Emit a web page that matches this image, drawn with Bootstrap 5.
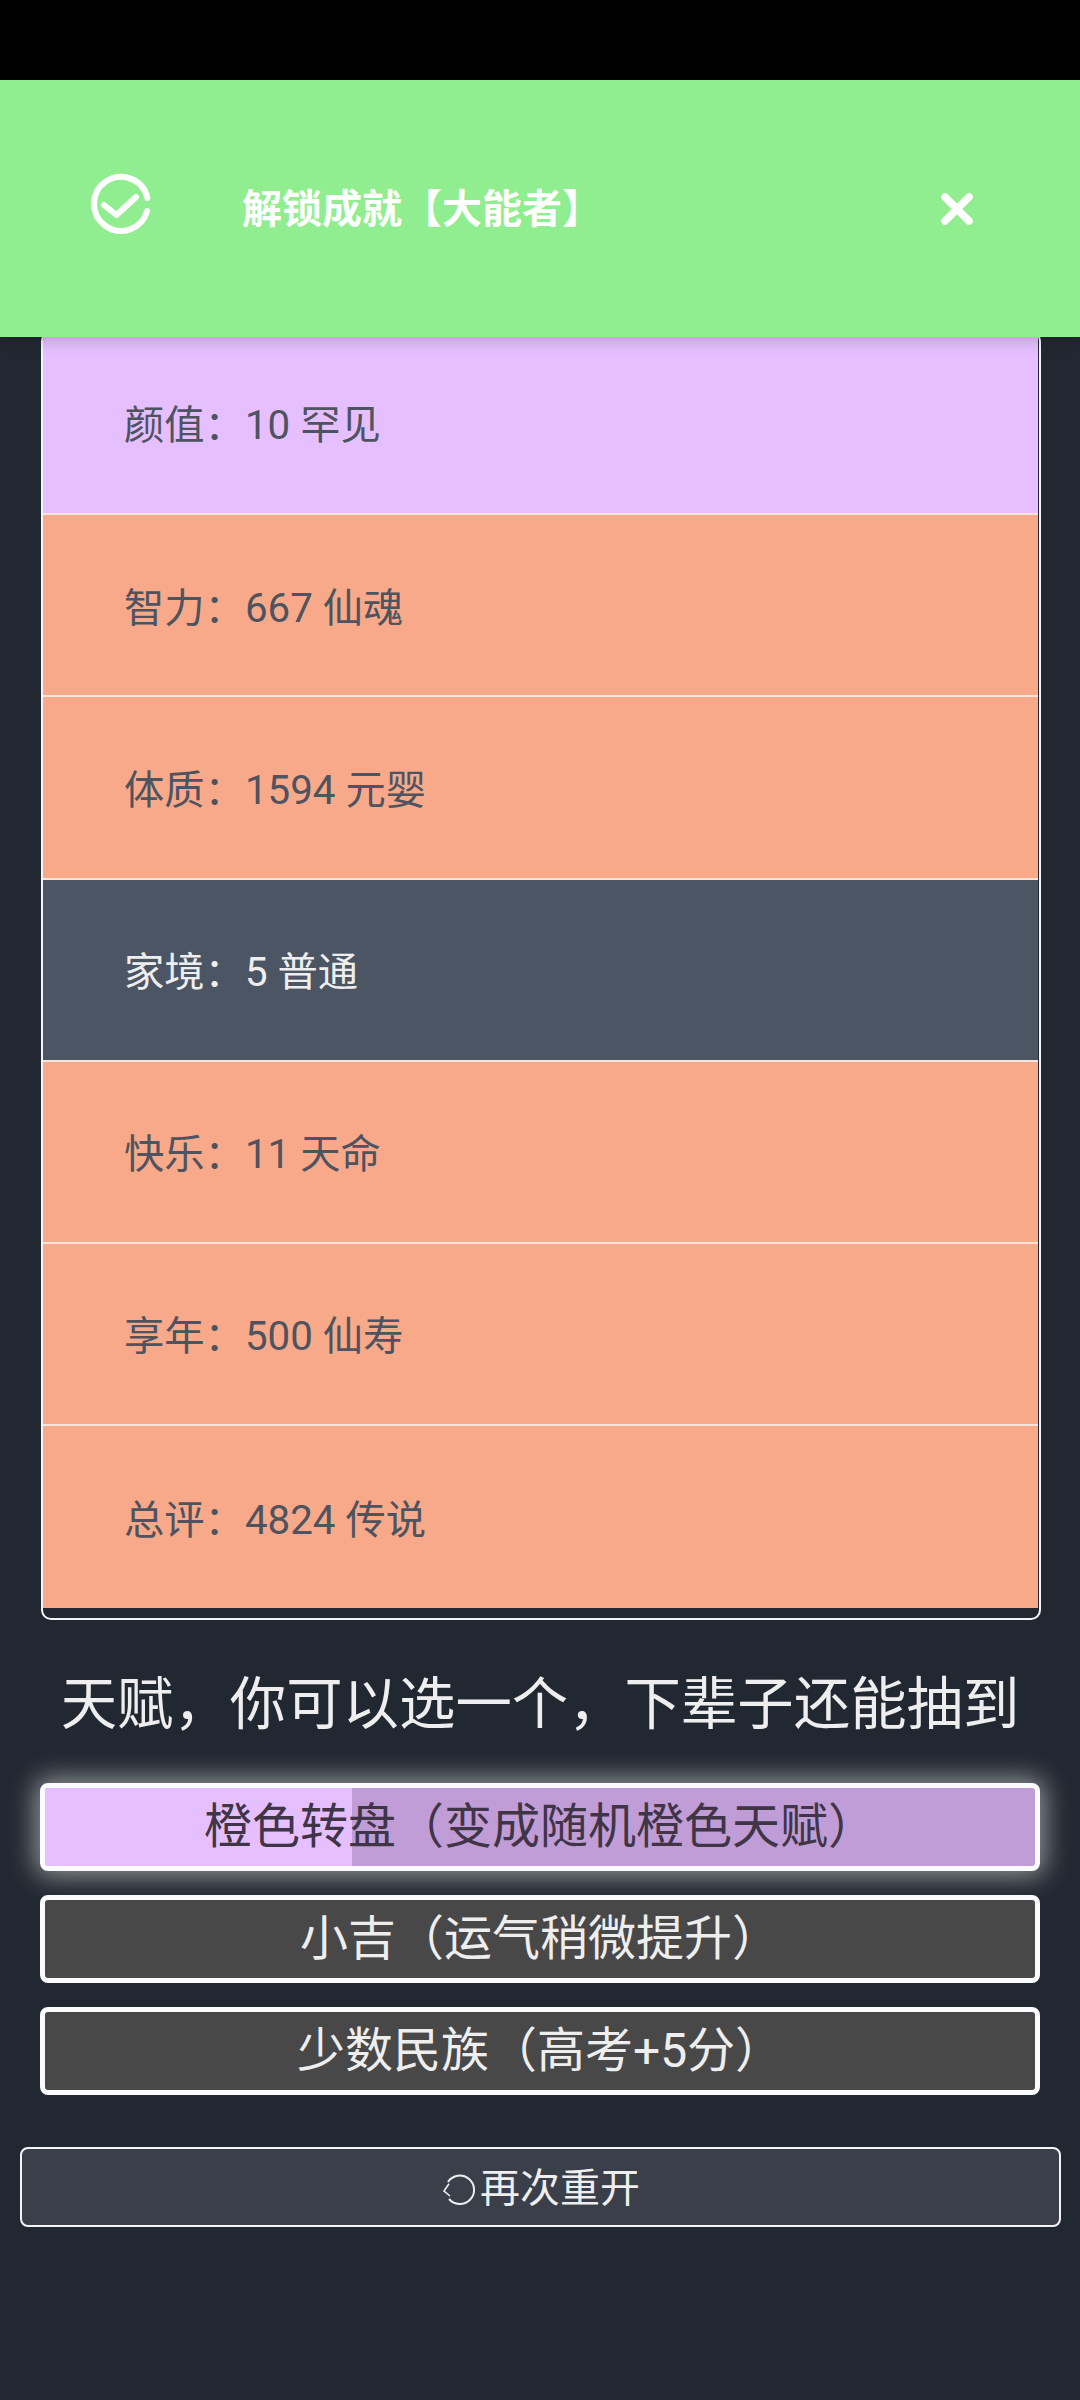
<!doctype html>
<html lang="zh-CN">
<head>
<meta charset="utf-8">
<title>人生重开</title>
<link href="https://cdn.jsdelivr.net/npm/bootstrap@5.3.0/dist/css/bootstrap.min.css" rel="stylesheet">
<style>
html,body{height:100%}
body{background:#222831;font-family:Roboto,"Noto Sans CJK SC",sans-serif;color:#eeeeee}
.app-shell{position:relative;width:1080px;height:2400px;overflow:hidden}
.status-strip{height:80px;background:#000}
.toast-bar{position:absolute;top:80px;left:0;right:0;height:257px;background:#90ee90;color:#fff;box-shadow:0 3px 14px rgba(0,0,0,.2);z-index:5;padding:0 106px 0 91px}
.toast-icon{width:60px;height:62px;margin-top:-9px}
.toast-label{font-size:40px;font-weight:700;margin-left:91px;line-height:1;padding-top:3px}
.toast-close{width:34px;height:34px;margin-top:1px}
.stat-frame{border:2px solid #f4f4f8;border-radius:10px;padding:0 1px 12px 0;overflow:hidden;height:1289px;margin:-2px 39px 0 41px}
.stat-spacer{height:253px;flex:none}
.stat-row{height:182.2px;padding:7px 0 0 81px;font-size:40.3px;color:#4e5360;border:0;border-bottom:2px solid #f3e4dc;border-radius:0;display:flex;align-items:center;line-height:1}
.stat-row:last-child{border-bottom:0}
.grade-purple{background:#e5bfff}
.grade-orange{background:#f8a98a}
.grade-plain{background:#4b5563;color:#eeeeee}
.talent-title{font-size:56.4px;line-height:1;text-align:center;margin:0;padding:57px 0 50px;font-weight:400;white-space:nowrap}
.talent-list{padding:0 40px;gap:24px}
.talent-btn{height:88px;width:100%;border:5px solid #fbfbfd;border-radius:8px;background:#484848;color:#eeeeee;font-size:48px;line-height:1;padding:0;display:flex;align-items:center;justify-content:center;position:relative;overflow:hidden}
.talent-glow{box-shadow:0 0 26px 5px rgba(238,238,238,.55);overflow:visible;background:#c09dd6;color:#3f3547}
.talent-fill{position:absolute;left:0;top:0;bottom:0;width:31%;background:#e5bfff;border-radius:3px 0 0 3px}
.talent-text{position:relative;white-space:nowrap}
.restart-btn{margin:52px 20px 0;width:1041px;height:80px;background:#3b3f4a;border:2px solid #f4f4f8;border-radius:8px;color:#eeeeee;font-size:40px;line-height:1;padding:3px 0 0 2px;display:flex;align-items:center;justify-content:center}
.restart-icon{width:32px;height:32px;margin-right:5px;margin-top:1px}
</style>
</head>
<body>
<div class="app-shell">
  <div class="status-strip"></div>
  <div class="toast-bar d-flex align-items-center">
    <svg class="toast-icon flex-shrink-0" viewBox="0 0 60 60" fill="none" stroke="#fff" stroke-width="6" stroke-linecap="round" stroke-linejoin="round"><path d="M56.4 24A27 27 0 1 0 56.1 37"/><path d="M13 31 25.5 41 45 23"/></svg>
    <div class="toast-label flex-grow-1">解锁成就【大能者】</div>
    <svg class="toast-close flex-shrink-0" viewBox="0 0 34 34" fill="none" stroke="#fff" stroke-width="7.5" stroke-linecap="round"><path d="M5 5 29 29M29 5 5 29"/></svg>
  </div>
  <div class="stat-spacer"></div>
  <div class="stat-frame">
    <div class="list-group list-group-flush">
      <div class="stat-row grade-purple">颜值：10 罕见</div>
      <div class="stat-row grade-orange">智力：667 仙魂</div>
      <div class="stat-row grade-orange">体质：1594 元婴</div>
      <div class="stat-row grade-plain">家境：5 普通</div>
      <div class="stat-row grade-orange">快乐：11 天命</div>
      <div class="stat-row grade-orange">享年：500 仙寿</div>
      <div class="stat-row grade-orange">总评：4824 传说</div>
    </div>
  </div>
  <h2 class="talent-title">天赋，你可以选一个，下辈子还能抽到</h2>
  <div class="talent-list d-flex flex-column">
    <button class="btn talent-btn talent-glow"><span class="talent-fill"></span><span class="talent-text">橙色转盘（变成随机橙色天赋）</span></button>
    <button class="btn talent-btn"><span class="talent-text">小吉（运气稍微提升）</span></button>
    <button class="btn talent-btn"><span class="talent-text">少数民族（高考+5分）</span></button>
  </div>
  <button class="btn restart-btn"><svg class="restart-icon" viewBox="0 0 32 32" fill="none" stroke="#eeeeee" stroke-width="2"><path d="M5 9A14.2 14.2 0 1 1 6 26"/><path d="M6 10.7 1 18 7 23" stroke-width="1.6"/></svg>再次重开</button>
</div>
<script src="https://cdn.jsdelivr.net/npm/bootstrap@5.3.0/dist/js/bootstrap.bundle.min.js"></script>
</body>
</html>
